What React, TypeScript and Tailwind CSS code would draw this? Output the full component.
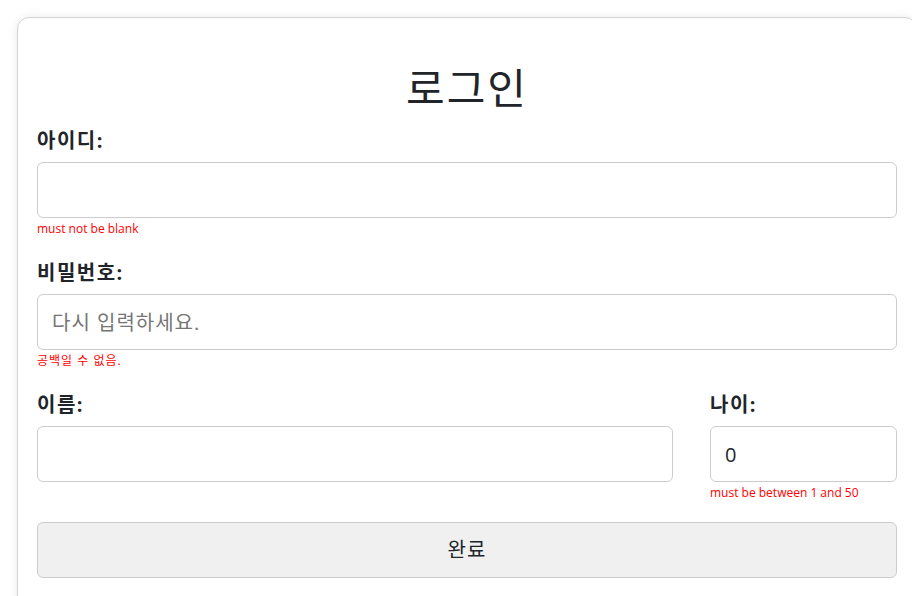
import React from "react";

const font = { fontFamily: '"Open Sans", "Noto Sans CJK KR", sans-serif' };

function Field({
  label,
  placeholder,
  value,
  error,
  errorKo = false,
  className = "",
}: {
  label: string;
  placeholder?: string;
  value?: string;
  error?: string;
  errorKo?: boolean;
  className?: string;
}) {
  return (
    <div className={className}>
      <label className="block text-[20px] leading-[27px] font-bold tracking-[1.5px] text-[#212529] mb-[8px]">
        {label}
      </label>
      <input
        readOnly
        placeholder={placeholder}
        defaultValue={value}
        className="block w-full h-[56px] border border-[#cccccc] rounded-[6px] px-[14px] text-[20px] text-[#212529] placeholder:text-[#757575] placeholder:tracking-[1px] bg-white outline-none"
        style={font}
      />
      {error ? (
        <div
          className={
            errorKo
              ? "mt-[2px] text-[12px] leading-[18px] tracking-[1px] text-[#ff0000]"
              : "mt-[2px] text-[12px] leading-[18px] text-[#ff0000]"
          }
        >
          {error}
        </div>
      ) : null}
    </div>
  );
}

export default function App() {
  return (
    <div className="w-[912px] h-[596px] overflow-hidden bg-white" style={font}>
      <div className="pl-[17px] pt-[17px]">
        <div className="w-[900px] h-[620px] bg-white border border-[#d4d4d4] rounded-[12px] shadow-[0_0_10px_rgba(0,0,0,0.08)] px-[19px] pt-[46px]">
          <h1 className="text-center text-[42px] leading-[48px] font-normal tracking-[2px] text-[#212529] mb-[15px]">
            로그인
          </h1>
          <Field label="아이디:" error="must not be blank" className="mb-[21px]" />
          <Field
            label="비밀번호:"
            placeholder="다시 입력하세요."
            error="공백일 수 없음."
            errorKo
            className="mb-[21px]"
          />
          <div className="flex items-start gap-[37px] mb-[20px]">
            <Field label="이름:" className="flex-1" />
            <Field label="나이:" value="0" error="must be between 1 and 50" className="w-[187px]" />
          </div>
          <button
            className="block w-full h-[56px] bg-[#f0f0f0] border border-[#cccccc] rounded-[6px] text-[20px] tracking-[1px] text-[#212529]"
            style={font}
          >
            완료
          </button>
        </div>
      </div>
    </div>
  );
}
